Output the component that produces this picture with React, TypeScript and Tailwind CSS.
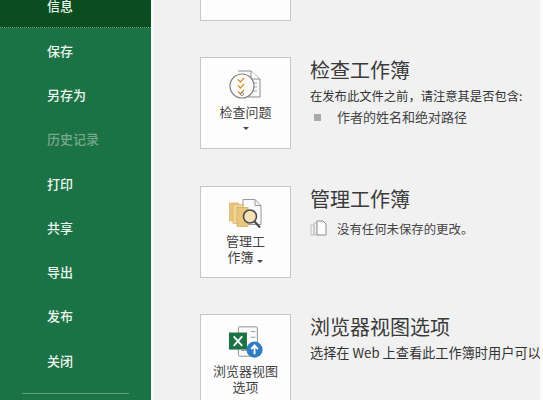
const cjk = "font-['Noto_Sans_CJK_SC','Noto_Sans',sans-serif]";

function NavItem({ label, muted }: { label: string; muted?: boolean }) {
  return (
    <div className={`h-[44.3px] flex items-center pl-[47px] text-[13px] leading-none font-medium ${muted ? 'text-[#79a88d]' : 'text-[#eef6f0]'}`}>
      {label}
    </div>
  );
}

function InspectIcon() {
  return (
    <svg width="33" height="31" viewBox="0 0 33 31" fill="none">
      <path d="M9 1H22L31 9V27H19" fill="#fafafa" stroke="#8a8a8a" strokeWidth="1" />
      <path d="M22 1V9H31" fill="#fff" stroke="#8a8a8a" strokeWidth="1" />
      <path d="M24 13H28M24 17H28M24 21H28" stroke="#a8a8a8" strokeWidth="1" />
      <circle cx="13" cy="16" r="12" fill="#fbfbfb" stroke="#808080" strokeWidth="1.2" />
      <path d="M9 9.5l2.5 2.5 3.5-4M9 15.5l2.5 2.5 3.5-4M9 21.5l2.5 2.5 3.5-4" stroke="#d9902f" strokeWidth="1.3" />
      <circle cx="13" cy="24" r="1.6" stroke="#8a8a8a" strokeWidth="0.9" />
    </svg>
  );
}

function ManageIcon() {
  return (
    <svg width="36" height="32" viewBox="0 0 36 31" fill="none">
      <path d="M15 1H27L33 7V26H15Z" fill="#fafafa" stroke="#9a9a9a" strokeWidth="1" />
      <path d="M27 1V7H33" stroke="#9a9a9a" strokeWidth="1" />
      <rect x="1" y="4" width="10" height="19" fill="#e6c37c" />
      <rect x="5" y="6" width="10" height="19" fill="#efd596" stroke="#dcb769" strokeWidth="0.8" />
      <rect x="9" y="9" width="11" height="19" fill="#e8c67e" stroke="#d6b062" strokeWidth="0.8" />
      <circle cx="22" cy="18" r="6.5" fill="#f4e2b4" stroke="#4c4c4c" strokeWidth="1.6" />
      <path d="M26.5 23L32 29" stroke="#4c4c4c" strokeWidth="2.2" />
    </svg>
  );
}

function BrowserIcon() {
  return (
    <svg width="36" height="34" viewBox="0 0 38 34" fill="none">
      <rect x="11" y="1" width="20" height="31" rx="1" fill="#fbfbfb" stroke="#8c8c8c" strokeWidth="1" />
      <path d="M24 6H29M24 12H29M24 18H29M14 26H20" stroke="#9a9a9a" strokeWidth="1" />
      <rect x="1" y="7" width="19" height="18" fill="#1b7345" />
      <path d="M6 11L15 21M15 11L6 21" stroke="#fff" strokeWidth="2" />
      <circle cx="28" cy="25" r="8.5" fill="#2f7cc0" />
      <path d="M28 30V21M24.5 24.5L28 20.5L31.5 24.5" stroke="#fff" strokeWidth="2" />
    </svg>
  );
}

function Caret() {
  return <span className="inline-block w-0 h-0 border-x-[3px] border-x-transparent border-t-[3px] border-t-[#444]" />;
}

function Section({ icon, button, title, children, caretBelow, tight }: { icon: React.ReactNode; button: React.ReactNode; title: string; children?: React.ReactNode; caretBelow?: boolean; tight?: boolean }) {
  return (
    <div className="h-[128.5px] flex shrink-0">
      <div className="w-[91px] h-[92px] shrink-0 border border-[#c6c6c6] bg-[#fdfdfd] flex flex-col items-center pt-[10px]">
        <div className="h-[34px] flex items-center justify-center">{icon}</div>
        <div className={`text-[13px] leading-[16px] text-[#444] text-center whitespace-nowrap ${tight ? 'mt-[4px]' : 'mt-[2px]'}`}>{button}</div>
        {caretBelow && <div className="flex h-[3px] mt-[7px]"><Caret /></div>}
      </div>
      <div className="ml-[19px] min-w-0 flex-1">
        <div className="text-[20px] leading-[26px] text-[#3a3a3a] whitespace-nowrap">{title}</div>
        {children}
      </div>
    </div>
  );
}

export default function App() {
  return (
    <div className={`${cjk} w-[543px] h-[400px] flex overflow-hidden bg-[#f1f1f2]`}>
      <aside className="w-[151px] h-full shrink-0 bg-[#1b7245] flex flex-col">
        <div className="h-[28px] shrink-0 bg-[#0a4d1f] border-b border-dotted border-[#6fa583] flex items-end pl-[47px] pb-[15px] text-[13px] leading-[13px] font-medium text-[#eef6f0]">信息</div>
        <NavItem label="保存" />
        <NavItem label="另存为" />
        <NavItem label="历史记录" muted />
        <NavItem label="打印" />
        <NavItem label="共享" />
        <NavItem label="导出" />
        <NavItem label="发布" />
        <NavItem label="关闭" />
        <div className="mt-[10.5px] ml-[22px] w-[107px] h-[1px] bg-[#5fa27c]" />
      </aside>
      <div className="w-[3px] shrink-0 bg-[#f8f8f8]" />
      <main className="flex-1 min-w-0 overflow-hidden pl-[46px] flex flex-col">
        <div className="h-[21px] w-[91px] shrink-0 border border-t-0 border-[#c6c6c6] bg-[#fdfdfd]" />
        <div className="h-[36px] shrink-0" />
        <Section icon={<InspectIcon />} button="检查问题" title="检查工作簿" caretBelow>
          <div className="mt-[4px] text-[12.3px] leading-[18px] text-[#333] whitespace-nowrap">在发布此文件之前，请注意其是否包含:</div>
          <div className="mt-[3px] flex items-center text-[13px] leading-[18px] text-[#444] whitespace-nowrap">
            <span className="w-[7px] h-[7px] bg-[#a9a9a9] ml-[4px] mr-[16px]" />
            作者的姓名和绝对路径
          </div>
        </Section>
        <Section icon={<ManageIcon />} button={<>管理工<br />作簿 <span className="inline-block align-middle ml-[1px]"><Caret /></span></>} title="管理工作簿">
          <div className="mt-[8px] flex items-center text-[12.4px] leading-[18px] text-[#444] whitespace-nowrap">
            <svg width="17" height="17" viewBox="0 0 17 17" fill="none" className="mr-[10px] shrink-0">
              <path d="M1 5H4V15H1ZM4 3H7V15H4Z" fill="#f4f4f4" stroke="#b5b5b5" strokeWidth="0.8" />
              <path d="M7 1H13L16 4V15H7Z" fill="#fbfbfb" stroke="#8e8e8e" strokeWidth="1" />
            </svg>
            没有任何未保存的更改。
          </div>
        </Section>
        <Section icon={<BrowserIcon />} button={<>浏览器视图<br />选项</>} title="浏览器视图选项" tight>
          <div className="mt-[4px] text-[13.2px] leading-[18px] text-[#333] whitespace-nowrap">选择在 Web 上查看此工作簿时用户可以</div>
        </Section>
      </main>
      <div className="w-[3px] shrink-0 bg-[#fbfbfb]" />
    </div>
  );
}
